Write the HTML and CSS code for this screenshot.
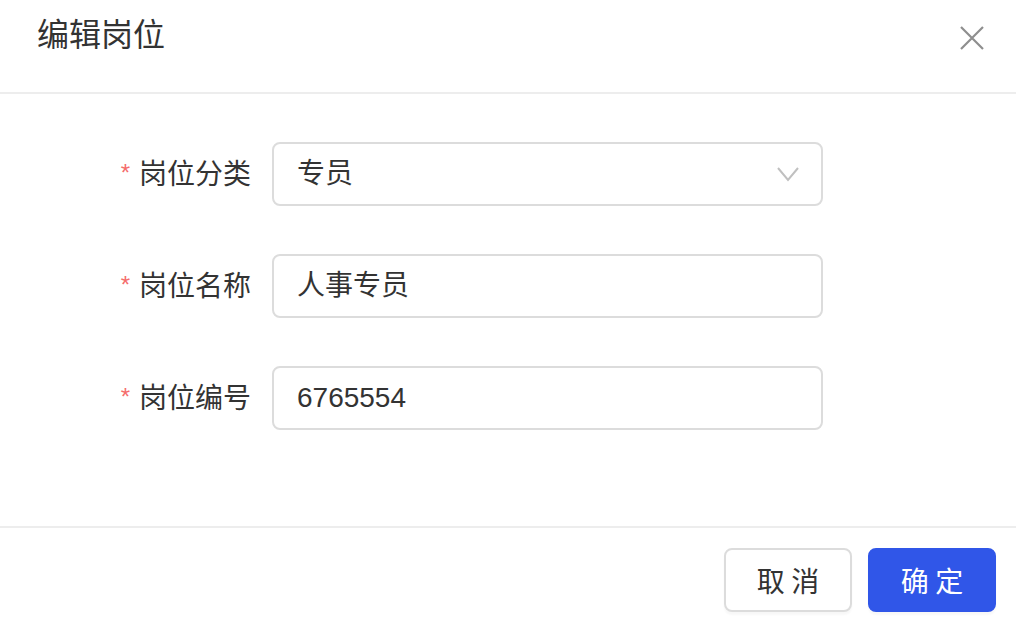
FILE: index.html
```html
<!DOCTYPE html>
<html lang="zh-CN">
<head>
<meta charset="utf-8">
<title>编辑岗位</title>
<link rel="stylesheet" href="styles.css">
</head>
<body>
<div class="dialog">
  <div class="dialog-header">
    <span class="dialog-title">编辑岗位</span>
    <button class="close-btn" aria-label="关闭">
      <svg width="24" height="24" viewBox="0 0 24 24"><path d="M1 1L23 23M23 1L1 23" stroke="#8e8e8e" stroke-width="2.2" fill="none"/></svg>
    </button>
  </div>
  <div class="dialog-body">
    <div class="form-row">
      <label class="form-label"><span class="req">*</span>岗位分类</label>
      <div class="input select">
        <span class="input-text">专员</span>
        <svg class="arrow" width="22" height="16" viewBox="0 0 22 16"><path d="M1 2L11 14L21 2" stroke="#c0c0c0" stroke-width="2" fill="none"/></svg>
      </div>
    </div>
    <div class="form-row">
      <label class="form-label"><span class="req">*</span>岗位名称</label>
      <div class="input"><span class="input-text">人事专员</span></div>
    </div>
    <div class="form-row">
      <label class="form-label"><span class="req">*</span>岗位编号</label>
      <div class="input"><span class="input-text">6765554</span></div>
    </div>
  </div>
  <div class="dialog-footer">
    <button class="btn btn-default">取 消</button>
    <button class="btn btn-primary">确 定</button>
  </div>
</div>
</body>
</html>
```

FILE: styles.css
```css
html, body {
  margin: 0;
  padding: 0;
  background: #fff;
}
body {
  font-family: "Liberation Sans", "Noto Sans CJK SC", sans-serif;
  color: #333;
}
.dialog {
  width: 1016px;
}
.dialog-header {
  height: 92px;
  border-bottom: 2px solid #ededed;
  box-sizing: content-box;
  display: flex;
  align-items: flex-start;
  justify-content: space-between;
  padding: 0 32px 0 37px;
}
.dialog-title {
  font-size: 32px;
  line-height: 32px;
  padding-top: 19px;
  color: #333;
}
.close-btn {
  border: 0;
  background: none;
  padding: 0;
  margin-top: 26px;
  width: 24px;
  height: 24px;
  display: block;
}
.close-btn svg { display: block; }
.dialog-body {
  padding: 48px 0 48px 0;
}
.form-row {
  display: flex;
  align-items: center;
  height: 64px;
  margin-bottom: 48px;
}
.form-label {
  width: 272px;
  height: 64px;
  box-sizing: border-box;
  padding-right: 21px;
  display: flex;
  align-items: center;
  justify-content: flex-end;
  font-size: 28px;
  line-height: 1;
  color: #333;
  padding-top: 2px;
}
.req {
  color: #f56c6c;
  font-size: 24px;
  margin-right: 9px;
  position: relative;
  top: -2px;
}
.input {
  width: 551px;
  height: 64px;
  box-sizing: border-box;
  border: 2px solid #dcdcdc;
  border-radius: 8px;
  padding: 0 22px 0 23px;
  display: flex;
  align-items: center;
  justify-content: space-between;
  font-size: 28px;
  line-height: 1;
  color: #333;
}
.arrow {
  display: block;
}
.dialog-footer {
  border-top: 2px solid #ededed;
  padding: 20px 20px 14px;
  display: flex;
  justify-content: flex-end;
  gap: 16px;
}
.btn {
  width: 128px;
  height: 64px;
  border-radius: 8px;
  font-family: "Noto Sans CJK SC", sans-serif;
  font-size: 28px;
  box-sizing: border-box;
  padding: 0;
  box-shadow: 0 3px 2px rgba(0,0,0,0.03);
}
.btn-default {
  background: #fff;
  border: 2px solid #dcdcdc;
  color: #333;
}
.btn-primary {
  background: #3056e8;
  border: 2px solid #3056e8;
  color: #fff;
}
```
